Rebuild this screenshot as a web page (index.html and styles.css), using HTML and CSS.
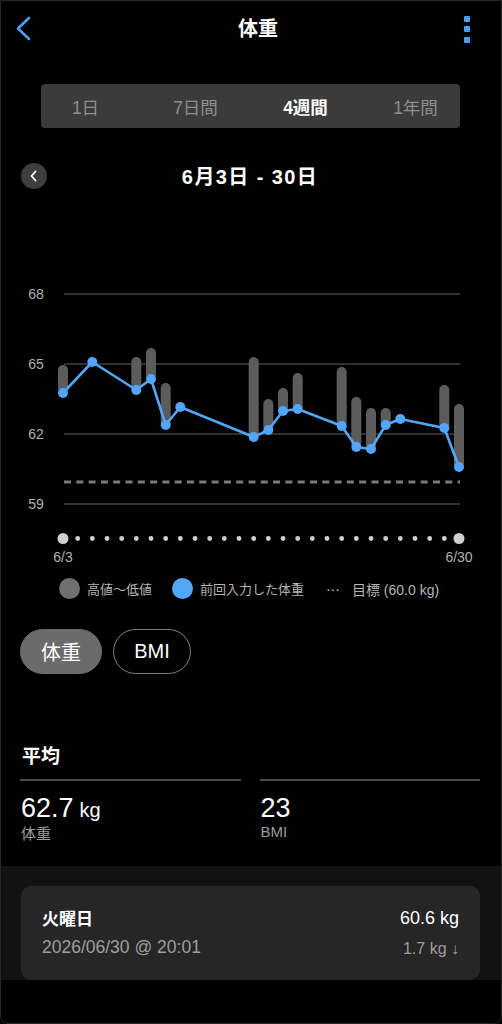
FILE: index.html
```html
<!DOCTYPE html>
<html lang="ja">
<head>
<meta charset="utf-8">
<title>体重</title>
<link rel="stylesheet" href="styles.css">
</head>
<body>
<div class="page">
  <header class="topbar">
    <svg class="back" width="20" height="26" viewBox="0 0 20 26"><polyline points="13,2 2,12.5 13,23" fill="none" stroke="#4a9ff5" stroke-width="2.6" stroke-linecap="round" stroke-linejoin="round"/></svg>
    <h1 class="title">体重</h1>
    <div class="kebab"><span></span><span></span><span></span></div>
  </header>

  <div class="tabs-wrap">
    <div class="tabs">
      <span class="tab">1日</span>
      <span class="tab">7日間</span>
      <span class="tab active">4週間</span>
      <span class="tab">1年間</span>
    </div>
  </div>

  <div class="daterow">
    <span class="prev"><svg width="10" height="12" viewBox="0 0 10 12"><polyline points="6.5,1.5 2.5,6 6.5,10.5" fill="none" stroke="#fff" stroke-width="1.8" stroke-linecap="round" stroke-linejoin="round"/></svg></span>
    <span class="range">6月3日 - 30日</span>
  </div>

  <svg class="chart" width="502" height="382" viewBox="0 188 502 382">
    <g stroke="#424242" stroke-width="1.5">
      <line x1="63" y1="294" x2="459" y2="294"/>
      <line x1="63" y1="364" x2="459" y2="364"/>
      <line x1="63" y1="434" x2="459" y2="434"/>
      <line x1="63" y1="504" x2="459" y2="504"/>
    </g>
    <g class="ylab" fill="#b0b0b0" font-size="14" text-anchor="middle">
      <text x="35" y="299">68</text>
      <text x="35" y="369">65</text>
      <text x="35" y="439">62</text>
      <text x="35" y="509">59</text>
    </g>
    <line x1="63" y1="482" x2="459" y2="482" stroke="#7a7a7a" stroke-width="3" stroke-dasharray="7 5.3"/>
    <g stroke="#5c5c5c" stroke-width="10" stroke-linecap="round">
      <line x1="62" y1="370" x2="62" y2="388"/>
      <line x1="135.3" y1="362" x2="135.3" y2="386"/>
      <line x1="150" y1="353" x2="150" y2="375"/>
      <line x1="164.7" y1="388" x2="164.7" y2="421"/>
      <line x1="252.7" y1="362" x2="252.7" y2="433"/>
      <line x1="267.3" y1="404" x2="267.3" y2="426"/>
      <line x1="282" y1="393" x2="282" y2="407"/>
      <line x1="296.7" y1="378" x2="296.7" y2="405"/>
      <line x1="340.7" y1="372" x2="340.7" y2="422"/>
      <line x1="355.3" y1="402" x2="355.3" y2="443"/>
      <line x1="370" y1="413" x2="370" y2="445"/>
      <line x1="384.7" y1="413" x2="384.7" y2="421"/>
      <line x1="443.3" y1="390" x2="443.3" y2="424"/>
      <line x1="458" y1="409" x2="458" y2="463"/>
    </g>
    <polyline fill="none" stroke="#52a6f7" stroke-width="2.6" stroke-linejoin="round" points="62,393 91.3,362 135.3,390 150,379 164.7,425 179.3,407 252.7,437 267.3,430 282,411 296.7,409 340.7,426 355.3,447 370,449 384.7,425 399.3,419 443.3,428 458,467"/>
    <g fill="#52a6f7">
      <circle cx="62" cy="393" r="5"/>
      <circle cx="91.3" cy="362" r="5"/>
      <circle cx="135.3" cy="390" r="5"/>
      <circle cx="150" cy="379" r="5"/>
      <circle cx="164.7" cy="425" r="5"/>
      <circle cx="179.3" cy="407" r="5"/>
      <circle cx="252.7" cy="437" r="5"/>
      <circle cx="267.3" cy="430" r="5"/>
      <circle cx="282" cy="411" r="5"/>
      <circle cx="296.7" cy="409" r="5"/>
      <circle cx="340.7" cy="426" r="5"/>
      <circle cx="355.3" cy="447" r="5"/>
      <circle cx="370" cy="449" r="5"/>
      <circle cx="384.7" cy="425" r="5"/>
      <circle cx="399.3" cy="419" r="5"/>
      <circle cx="443.3" cy="428" r="5"/>
      <circle cx="458" cy="467" r="5"/>
    </g>
    <g fill="#cfcfcf">
      <circle cx="62" cy="538.5" r="5.5"/>
      <circle cx="458" cy="538.5" r="5.5"/>
      <circle cx="76.7" cy="538.5" r="2.4"/>
      <circle cx="91.3" cy="538.5" r="2.4"/>
      <circle cx="106" cy="538.5" r="2.4"/>
      <circle cx="120.7" cy="538.5" r="2.4"/>
      <circle cx="135.3" cy="538.5" r="2.4"/>
      <circle cx="150" cy="538.5" r="2.4"/>
      <circle cx="164.7" cy="538.5" r="2.4"/>
      <circle cx="179.3" cy="538.5" r="2.4"/>
      <circle cx="194" cy="538.5" r="2.4"/>
      <circle cx="208.7" cy="538.5" r="2.4"/>
      <circle cx="223.3" cy="538.5" r="2.4"/>
      <circle cx="238" cy="538.5" r="2.4"/>
      <circle cx="252.7" cy="538.5" r="2.4"/>
      <circle cx="267.3" cy="538.5" r="2.4"/>
      <circle cx="282" cy="538.5" r="2.4"/>
      <circle cx="296.7" cy="538.5" r="2.4"/>
      <circle cx="311.3" cy="538.5" r="2.4"/>
      <circle cx="326" cy="538.5" r="2.4"/>
      <circle cx="340.7" cy="538.5" r="2.4"/>
      <circle cx="355.3" cy="538.5" r="2.4"/>
      <circle cx="370" cy="538.5" r="2.4"/>
      <circle cx="384.7" cy="538.5" r="2.4"/>
      <circle cx="399.3" cy="538.5" r="2.4"/>
      <circle cx="414" cy="538.5" r="2.4"/>
      <circle cx="428.7" cy="538.5" r="2.4"/>
      <circle cx="443.3" cy="538.5" r="2.4"/>
    </g>
    <g fill="#b0b0b0" font-size="14" text-anchor="middle">
      <text x="62" y="562">6/3</text>
      <text x="458" y="562">6/30</text>
    </g>
  </svg>

  <div class="legend">
    <span class="lg"><i class="dot grey"></i>高値〜低値</span>
    <span class="lg"><i class="dot blue"></i>前回入力した体重</span>
    <span class="lg goal"><b class="dots">···</b>目標 (60.0 kg)</span>
  </div>

  <div class="pills">
    <span class="pill on">体重</span>
    <span class="pill">BMI</span>
  </div>

  <section class="stats">
    <h2 class="stats-title">平均</h2>
    <div class="cols">
      <div class="col">
        <div class="val">62.7<span class="unit">kg</span></div>
        <div class="lab">体重</div>
      </div>
      <div class="col">
        <div class="val">23</div>
        <div class="lab">BMI</div>
      </div>
    </div>
  </section>

  <section class="latest">
    <div class="card">
      <div class="card-left">
        <div class="day">火曜日</div>
        <div class="stamp">2026/06/30 @ 20:01</div>
      </div>
      <div class="card-right">
        <div class="weight">60.6 kg</div>
        <div class="diff">1.7 kg ↓</div>
      </div>
    </div>
  </section>
</div>
</body>
</html>
```

FILE: styles.css
```css
* { box-sizing: border-box; margin: 0; padding: 0; }
html, body { background: #000; }
body {
  width: 502px;
  height: 1024px;
  overflow: hidden;
  font-family: "Liberation Sans", "Noto Sans CJK JP", sans-serif;
  color: #fff;
}
.page {
  width: 502px;
  height: 1024px;
  border: 1px solid #262626;
  border-radius: 0 0 8px 8px;
  overflow: hidden;
}
.topbar {
  height: 55px;
  display: flex;
  align-items: center;
  justify-content: space-between;
  padding: 0 31px 0 15px;
}
.back { display: block; margin-top: 1px; }
.title {
  font-size: 20px;
  font-weight: 700;
  line-height: 24px;
  margin-left: 16px;
}
.kebab {
  display: flex;
  flex-direction: column;
  gap: 4.5px;
  margin-top: 1px;
}
.kebab span {
  width: 6px;
  height: 6px;
  border-radius: 1px;
  background: #4a9ff5;
}
.tabs-wrap {
  padding: 28px 41px 0 40px;
}
.tabs {
  height: 44px;
  background: #3b3b3b;
  border-radius: 4px;
  display: grid;
  grid-template-columns: repeat(4, 110px);
  justify-content: center;
  align-items: center;
}
.tab {
  text-align: center;
  font-size: 17.5px;
  color: #8d8d8d;
}
.tab.active { color: #fff; font-weight: 700; }

.daterow {
  margin-top: 33px;
  height: 27px;
  display: grid;
  grid-template-columns: 1fr auto 1fr;
  align-items: center;
  padding-left: 20px;
}
.prev {
  width: 26px;
  height: 26px;
  border-radius: 50%;
  background: #3e3e3e;
  display: flex;
  align-items: center;
  justify-content: center;
}
.prev svg { display: block; }
.range {
  font-size: 20px;
  font-weight: 700;
  letter-spacing: 1.4px;
  margin-left: -22px;
}
.chart { display: block; }

.legend {
  margin-top: 8px;
  height: 21px;
  display: flex;
  justify-content: center;
  align-items: center;
  gap: 20px;
  font-size: 13px;
  color: #b4b4b4;
  padding-right: 4px;
}
.lg { display: flex; align-items: center; gap: 7px; }
.lg.goal { margin-left: 2px; font-size: 14px; }
.dot { width: 21px; height: 21px; border-radius: 50%; display: block; }
.dot.grey { background: #707070; }
.dot.blue { background: #52a6f7; }
.dots { font-weight: 400; color: #c8c8c8; margin-right: 5px; }

.pills {
  margin-top: 30px;
  padding-left: 19px;
  display: flex;
  gap: 11px;
}
.pill {
  height: 45px;
  border-radius: 23px;
  display: flex;
  align-items: center;
  justify-content: center;
  font-size: 20px;
  width: 78px;
  border: 1.5px solid #7d7d7d;
}
.pill.on { width: 82px; background: #6b6b6b; border-color: #6b6b6b; }

.stats {
  margin-top: 72px;
  padding: 0 21px 0 19px;
}
.stats-title {
  font-size: 19px;
  font-weight: 700;
  line-height: 22px;
  padding-left: 2px;
}
.cols {
  margin-top: 11px;
  display: grid;
  grid-template-columns: 1fr 1fr;
  gap: 19px;
}
.col { border-top: 2px solid #484848; padding-top: 12px; }
.val { font-size: 27px; line-height: 30px; padding-left: 1px; }
.unit { font-size: 20px; margin-left: 6px; }
.lab { font-size: 15px; line-height: 18px; color: #9a9a9a; padding-left: 1px; }

.latest {
  margin-top: 23px;
  background: #121212;
  padding: 20px 21px 0 20px;
}
.card {
  height: 94px;
  background: #262626;
  border-radius: 10px;
  display: flex;
  justify-content: space-between;
  align-items: center;
  padding: 0 21px 0 21px;
}
.day { font-size: 17px; font-weight: 700; line-height: 22px; }
.stamp { font-size: 17.5px; color: #9e9e9e; margin-top: 6px; line-height: 20px; }
.card-right { text-align: right; }
.weight { font-size: 18px; line-height: 22px; }
.diff { font-size: 16px; color: #9e9e9e; margin-top: 10px; line-height: 20px; }
```
